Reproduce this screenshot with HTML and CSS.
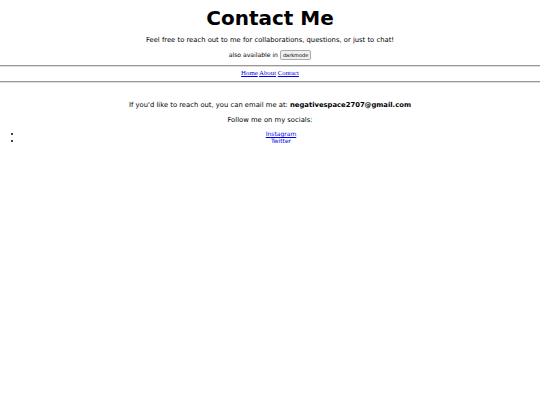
FILE: index.html
```html
<!DOCTYPE html>
<html>
<head>
<meta charset="utf-8">
<link rel="stylesheet" href="styles.css">
</head>
<body>
<header class="top">
<h1 class="title">Contact Me</h1>
<p class="lead">Feel free to reach out to me for collaborations, questions, or just to chat!</p>
<p class="alt">also available in <button class="mode">darkmode</button></p>
</header>
<hr class="rule">
<nav class="nav"><a href="#">Home</a> <a href="#">About</a> <a href="#">Contact</a></nav>
<hr class="rule rule-low">
<main class="content">
<p class="mail">If you'd like to reach out, you can email me at: <b>negativespace2707@gmail.com</b></p>
<p class="follow">Follow me on my socials:</p>
<ul class="socials">
<li><a href="#">Instagram</a></li>
<li><a href="#">Twitter</a></li>
</ul>
</main>
</body>
</html>
```
FILE: styles.css
```css
body {
  margin: 0;
  font-family: "DejaVu Sans", Verdana, sans-serif;
  font-size: 6.8px;
  color: #000;
  background: #fff;
  text-align: center;
}
.title {
  font-size: 20px;
  margin: 7px 0 0;
  line-height: 22px;
}
.lead {
  margin: 7px 0 0;
  line-height: 9px;
}
.alt {
  margin: 5px 0 0;
  line-height: 10px;
  font-size: 6.1px;
}
.mode {
  font-family: "DejaVu Sans", sans-serif;
  font-size: 5px;
  line-height: 6px;
  padding: 1px 2px;
  border: 1px solid #aaa;
  border-radius: 2px;
  background: #efefef;
  color: #000;
}
.rule {
  margin: 5px 0 0;
  border: 0;
  border-top: 1px solid #999;
  border-bottom: 1px solid #ddd;
}
.rule-low { margin-top: 2px; }
.nav {
  font-family: "Liberation Serif", "Times New Roman", serif;
  font-size: 6.8px;
  line-height: 8px;
  padding: 2px 0 2px;
}
.nav a, .socials a { color: #00e; }
.content { padding-top: 18px; }
.mail { margin: 0; line-height: 9px; }
.follow { margin: 6px 0 0; line-height: 9px; }
.socials {
  margin: 5px 0 0;
  padding: 0 0 0 22px;
  font-size: 6px;
  line-height: 7px;
}
```
